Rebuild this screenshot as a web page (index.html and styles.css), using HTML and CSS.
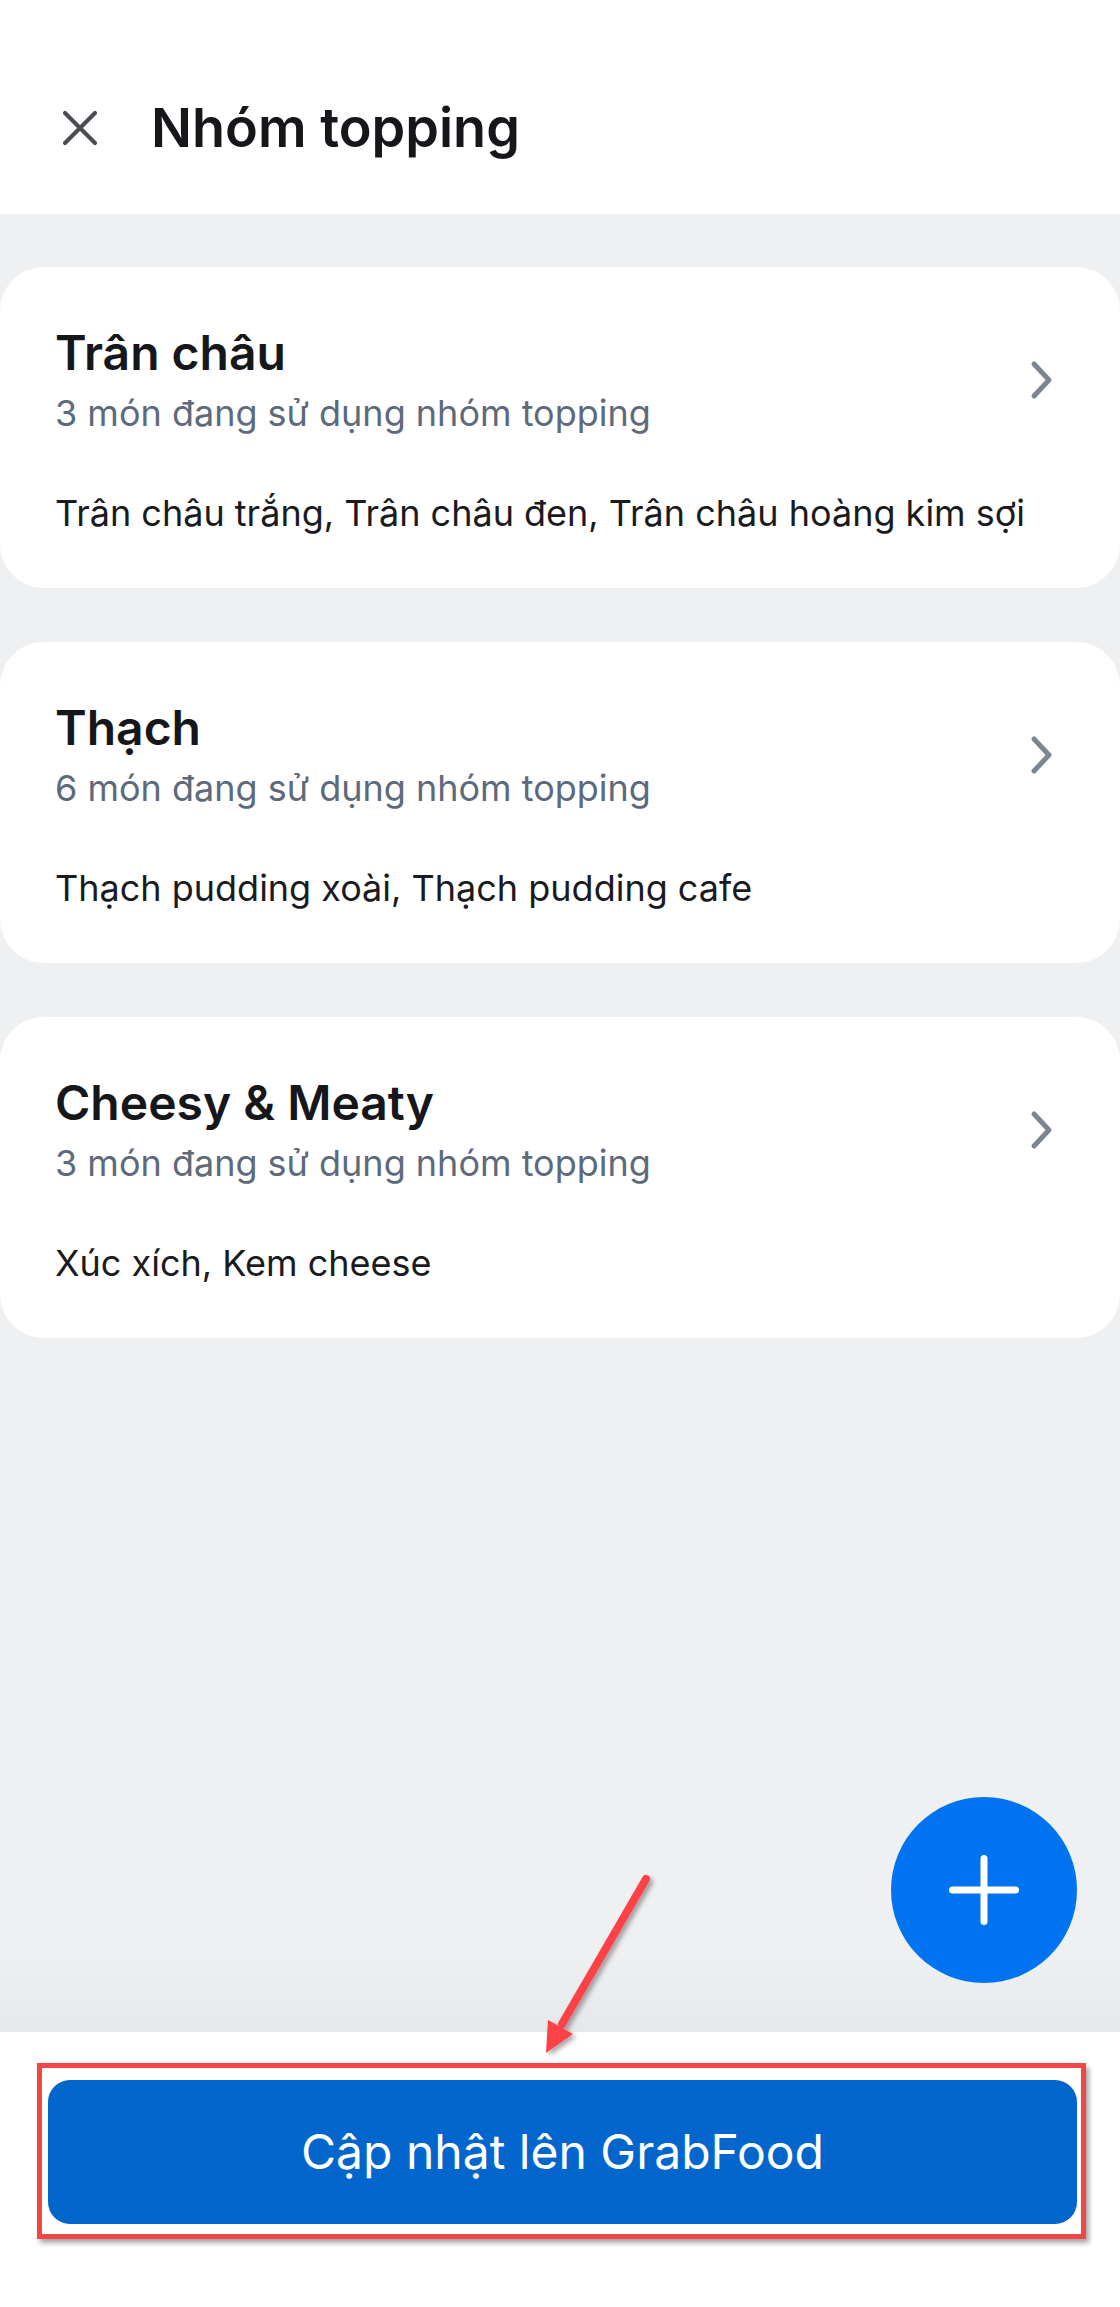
FILE: index.html
```html
<!DOCTYPE html>
<html lang="vi">
<head>
<meta charset="utf-8">
<title>Nhóm topping</title>
<link rel="stylesheet" href="styles.css">
</head>
<body>
<div class="screen">
  <header class="topbar">
    <svg class="close-icon" viewBox="0 0 40 40" width="40" height="40" aria-hidden="true">
      <path d="M5 5 L35 35 M35 5 L5 35" stroke="#4a4d52" stroke-width="4.2" stroke-linecap="round" fill="none"/>
    </svg>
    <h1 class="topbar-title">Nhóm topping</h1>
  </header>

  <main class="content">
    <section class="card">
      <div class="card-head">
        <div class="card-text">
          <h2 class="card-title">Trân châu</h2>
          <p class="card-sub">3 món đang sử dụng nhóm topping</p>
        </div>
        <svg class="chevron" viewBox="0 0 24 40" width="24" height="40" aria-hidden="true">
          <path d="M4 4 L19 20 L4 36" stroke="#7c8693" stroke-width="5" stroke-linecap="round" stroke-linejoin="round" fill="none"/>
        </svg>
      </div>
      <p class="card-items">Trân châu trắng, Trân châu đen, Trân châu hoàng kim sợi</p>
    </section>

    <section class="card">
      <div class="card-head">
        <div class="card-text">
          <h2 class="card-title">Thạch</h2>
          <p class="card-sub">6 món đang sử dụng nhóm topping</p>
        </div>
        <svg class="chevron" viewBox="0 0 24 40" width="24" height="40" aria-hidden="true">
          <path d="M4 4 L19 20 L4 36" stroke="#7c8693" stroke-width="5" stroke-linecap="round" stroke-linejoin="round" fill="none"/>
        </svg>
      </div>
      <p class="card-items">Thạch pudding xoài, Thạch pudding cafe</p>
    </section>

    <section class="card">
      <div class="card-head">
        <div class="card-text">
          <h2 class="card-title">Cheesy &amp; Meaty</h2>
          <p class="card-sub">3 món đang sử dụng nhóm topping</p>
        </div>
        <svg class="chevron" viewBox="0 0 24 40" width="24" height="40" aria-hidden="true">
          <path d="M4 4 L19 20 L4 36" stroke="#7c8693" stroke-width="5" stroke-linecap="round" stroke-linejoin="round" fill="none"/>
        </svg>
      </div>
      <p class="card-items">Xúc xích, Kem cheese</p>
    </section>

    <button class="fab" aria-label="Thêm">
      <svg viewBox="0 0 70 70" width="70" height="70" aria-hidden="true">
        <path d="M35 3.5 V66.5 M3.5 35 H66.5" stroke="#ffffff" stroke-width="7" stroke-linecap="round" fill="none"/>
      </svg>
    </button>
  </main>

  <footer class="bottombar">
    <div class="highlight-frame">
      <button class="primary-btn">Cập nhật lên GrabFood</button>
    </div>
  </footer>

  <svg class="annot-arrow" viewBox="0 0 200 220" width="200" height="220" aria-hidden="true">
    <defs>
      <filter id="sh" x="-20%" y="-20%" width="160%" height="160%">
        <feDropShadow dx="3" dy="3" stdDeviation="2.5" flood-color="#000" flood-opacity="0.35"/>
      </filter>
    </defs>
    <g filter="url(#sh)">
      <path d="M146 19 L62 164" stroke="#fd4346" stroke-width="8" stroke-linecap="round" fill="none"/>
      <path d="M46 193 L48 160 L73 174 Z" fill="#fd4346"/>
    </g>
  </svg>
</div>
</body>
</html>
```

FILE: styles.css
```css
* {
  box-sizing: border-box;
}

html, body {
  margin: 0;
  padding: 0;
}

body {
  width: 1120px;
  height: 2307px;
  background: #ffffff;
  font-family: Inter, "Noto Sans", "Liberation Sans", sans-serif;
  color: #16171a;
  overflow: hidden;
}

.screen {
  position: relative;
  width: 1120px;
  height: 2307px;
  display: flex;
  flex-direction: column;
}

.topbar {
  height: 214px;
  flex: 0 0 214px;
  background: #ffffff;
  display: flex;
  align-items: center;
  padding: 42px 0 0 60px;
}

.close-icon {
  display: block;
  flex: 0 0 40px;
}

.topbar-title {
  margin: 0 0 0 51px;
  font-size: 54px;
  font-weight: 600;
  line-height: 64px;
  color: #16171a;
  letter-spacing: 0;
}

.content {
  position: relative;
  flex: 1 1 auto;
  background: #eff0f2;
  padding-top: 53px;
  display: flex;
  flex-direction: column;
  gap: 54px;
}

.content::after {
  content: "";
  position: absolute;
  left: 0;
  right: 0;
  bottom: 0;
  height: 80px;
  background: linear-gradient(to bottom, rgba(0,0,0,0), rgba(0,0,0,0.035));
  pointer-events: none;
}

.card {
  background: #ffffff;
  border-radius: 44px;
  height: 321px;
  padding: 58px 66px 0 55px;
}

.card-head {
  display: flex;
  align-items: center;
  justify-content: space-between;
}

.card-text {
  display: flex;
  flex-direction: column;
}

.card-title {
  margin: 0;
  font-size: 48px;
  font-weight: 600;
  line-height: 56px;
  color: #16171a;
}

.card-sub {
  margin: 10px 0 0;
  font-size: 36px;
  font-weight: 400;
  line-height: 44px;
  color: #5e6a7b;
}

.chevron {
  display: block;
  flex: 0 0 24px;
}

.card-items {
  margin: 56px 0 0;
  font-size: 36px;
  font-weight: 400;
  line-height: 44px;
  color: #1a1b1e;
}

.fab {
  position: absolute;
  right: 43px;
  bottom: 49px;
  width: 186px;
  height: 186px;
  border-radius: 50%;
  border: none;
  background: #0073f0;
  display: flex;
  align-items: center;
  justify-content: center;
  padding: 0;
  z-index: 1;
}

.fab svg {
  display: block;
}

.bottombar {
  flex: 0 0 275px;
  background: #ffffff;
  padding: 31px 0 0 37px;
}

.highlight-frame {
  width: 1049px;
  height: 176px;
  border: 5px solid #f24747;
  padding: 12px 4px 10px 6px;
  box-shadow: 3px 4px 5px rgba(0,0,0,0.35);
}

.primary-btn {
  display: flex;
  align-items: center;
  justify-content: center;
  width: 100%;
  height: 144px;
  border: none;
  border-radius: 22px;
  background: #0366cc;
  color: #ffffff;
  font-family: Inter, "Noto Sans", "Liberation Sans", sans-serif;
  font-size: 48px;
  font-weight: 400;
  padding: 0 0 2px;
}

.annot-arrow {
  position: absolute;
  left: 500px;
  top: 1860px;
  overflow: visible;
  z-index: 2;
}
```
